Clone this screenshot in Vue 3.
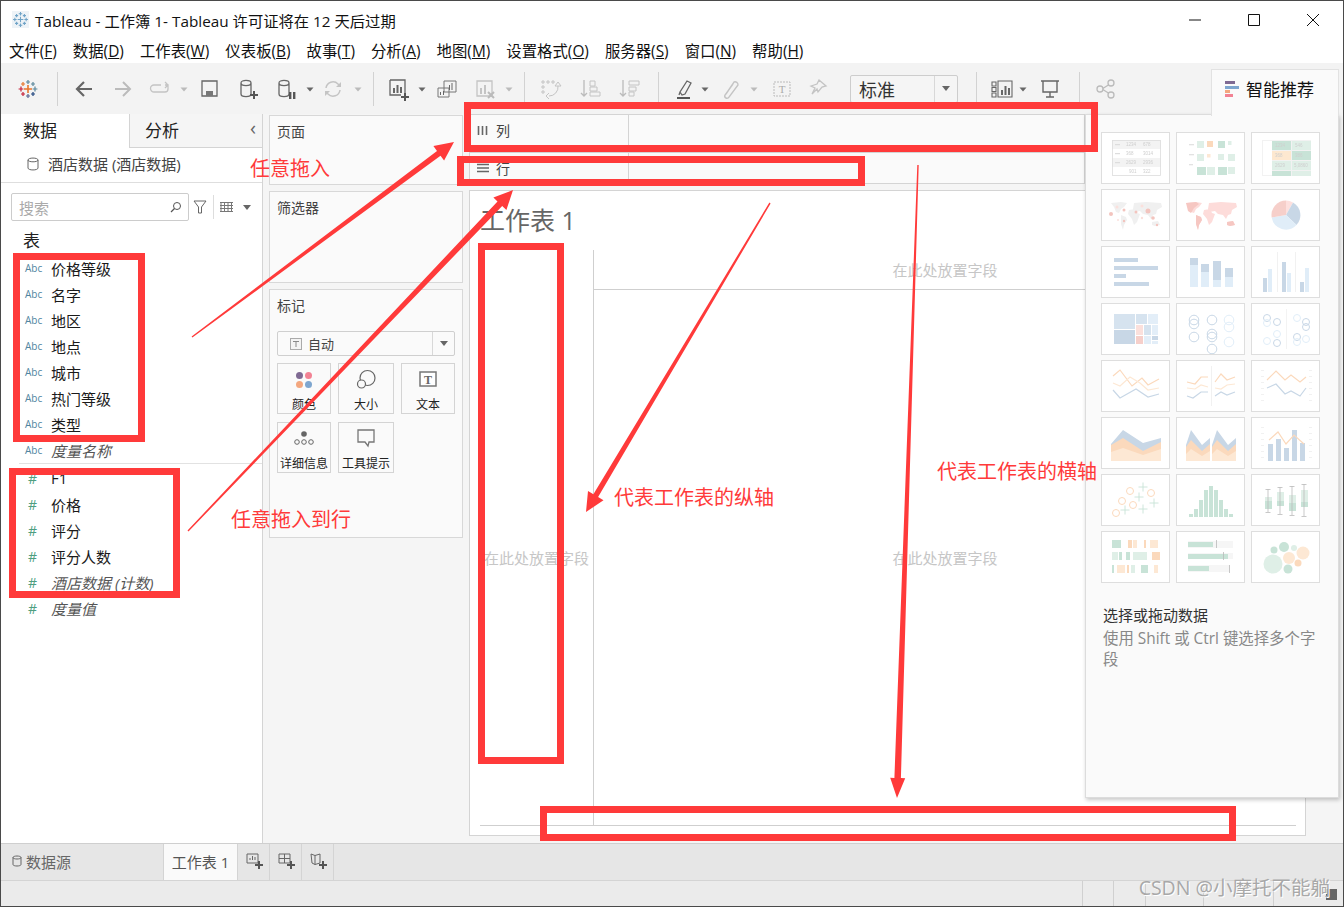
<script setup>
const menus = [
  ['文件', 'F'], ['数据', 'D'], ['工作表', 'W'], ['仪表板', 'B'], ['故事', 'T'], ['分析', 'A'],
  ['地图', 'M'], ['设置格式', 'O'], ['服务器', 'S'], ['窗口', 'N'], ['帮助', 'H']
]

const dims = ['价格等级', '名字', '地区', '地点', '城市', '热门等级', '类型']
const measures = [
  { name: 'F1' }, { name: '价格' }, { name: '评分' }, { name: '评分人数' },
  { name: '酒店数据 (计数)', it: true }, { name: '度量值', it: true }
]

const cyl = 'M5 6c0-3.4 10-3.4 10 0v11c0 3.4-10 3.4-10 0zM5 6c0 3.4 10 3.4 10 0'
const s = (d, c = '#666', w = 1.3) => `<path d="${d}" fill="none" stroke="${c}" stroke-width="${w}"/>`
const f = (d, c = '#666') => `<path d="${d}" fill="${c}"/>`
const caret = c => f('M8.5 10.5h7l-3.5 4z', c)
const logoPlus = (x, y, r, c, w = 1.2) => `<path d="M${x - r} ${y}h${r * 2}M${x} ${y - r}v${r * 2}" stroke="${c}" stroke-width="${w}" fill="none"/>`
const logo = logoPlus(12, 12, 4, '#e8762b', 1.6) + logoPlus(12, 5, 2, '#5b879b') + logoPlus(12, 19, 2, '#5b6591')
  + logoPlus(5, 12, 2.4, '#c72037') + logoPlus(19, 12, 2.4, '#5b879b') + logoPlus(7, 7, 2, '#e8762b')
  + logoPlus(17, 7, 2, '#59879b') + logoPlus(7, 17, 2, '#c72037') + logoPlus(17, 17, 2, '#1f447e')
const blueLogo = [[12, 12, 4], [12, 4, 2.5], [12, 20, 2.5], [4, 12, 2.5], [20, 12, 2.5], [6.500, 6.500, 2.2], [17.500, 6.500, 2.2], [6.500, 17.500, 2.2], [17.500, 17.500, 2.2]]
  .map(p => logoPlus(p[0], p[1], p[2], '#6fa3c7', 1.5)).join('')

const tools = [
  { w: 40, svg: logo },
  { w: 18, sep: true },
  { w: 36, svg: s('M20 12H5M12 5l-7 7 7 7', '#666', 2.2) },
  { w: 42, svg: s('M4 12h15M12 5l7 7-7 7', '#bbb', 2) },
  { w: 32, svg: s('M13 8H6a3 3 0 0 0 0 7h11a3 3 0 0 0 3-3V8h-3M17 5l3 3-3 3', '#c4c4c4') },
  { w: 16, svg: caret('#bbb') },
  { w: 36, svg: s('M4 4h15v15H4z') + f('M8 14h7v5H8z', '#777') },
  { w: 40, svg: s(cyl) + s('M14 18h8M18 14v8', '#555', 2) },
  { w: 36, svg: s(cyl) + f('M15 15h2.4v7H15zM19 15h2.4v7H19z', '#555') },
  { w: 12, svg: caret('#666') },
  { w: 34, svg: s('M5 11a7 7 0 0 1 12-4l2 2M19 13a7 7 0 0 1-12 4l-2-2', '#c4c4c4', 1.5) + f('M20 5v5h-5zM4 19v-5h5z', '#c4c4c4') },
  { w: 16, svg: caret('#bbb') },
  { w: 14, sep: true },
  { w: 36, svg: s('M4 3h15v14M4 3v15h11') + f('M7 11h2v5H7zM10.5 8h2v8h-2zM14 10h2v6h-2z', '#666') + s('M15 20h8M19 16v8', '#555', 2) },
  { w: 12, svg: caret('#666') },
  { w: 38, svg: s('M9 4h12v11H9zM3 11h11v9H3z', '#777', 1) + f('M14 8h1v5h-1zM16.500 6h1v7h-1zM5 15h1v3H5zM8 14h1v4H8z') },
  { w: 38, svg: s('M4 4h15v15H4z', '#c4c4c4') + f('M7 11h2v6H7zM11 8h2v9h-2z', '#c4c4c4') + s('M15 15l6 6M21 15l-6 6', '#bbb', 2) },
  { w: 10, svg: caret('#bbb') },
  { w: 20, sep: true },
  { w: 32, svg: s('M4 4h2v2H4zM9 4h2v2H9zM14 4h2v2h-2zM4 9h2v2H4zM4 14h2v2H4z', '#c4c4c4', 1) + s('M20 9a9 9 0 0 1-9 10M11 16l-3 3 3 3M20 5l3 4h-6z', '#c4c4c4', 1) },
  { w: 48, svg: s('M6 3v16M3 16l3 3 3-3', '#bbb') + s('M12 4h5v5h-5zM12 10h7v4h-7zM12 15h10v4H12z', '#c4c4c4', 1) },
  { w: 30, svg: s('M6 3v16M3 16l3 3 3-3', '#bbb') + s('M12 4h10v4H12zM12 10h7v4h-7zM12 15h5v4h-5z', '#c4c4c4', 1) },
  { w: 28, sep: true },
  { w: 24, svg: s('M8 15l2 3 3-1 6-11-4-2zM8 15l-1 3', '#666') + f('M5 20h13v2H5z', '#555') },
  { w: 18, svg: caret('#666') },
  { w: 32, svg: s('M8 17L16 5a3 3 0 0 1 4 3L11 20a2 2 0 0 1-4-2L15 7', '#c4c4c4', 1.4) },
  { w: 16, svg: caret('#bbb') },
  { w: 40, svg: '<rect x="4" y="5" width="16" height="14" fill="none" stroke="#bbb" stroke-dasharray="2 1"/><text x="12" y="16" text-anchor="middle" font-size="11" font-family="Liberation Serif" fill="#aaa">T</text>' },
  { w: 32, svg: s('M13 3l7 6-4 1-4 5-1-3-5 5 3-6-4-2 6-2z', '#c4c4c4') }
]

const tools2 = [
  { w: 9, svg: '' },
  { w: 18, sep: true },
  { w: 34, svg: s('M2 5h4v4H2zM2 10.500h4v4H2zM2 16h4v4H2zM8 4h14v16H8z', '#666', 1.1) + f('M11 13h2v5h-2zM14.500 9h2v9h-2zM18 11h2v7h-2z') },
  { w: 8, svg: caret('#666') },
  { w: 46, svg: s('M3 4h18M5 4v11h14V4M12 15v5M8 20h8', '#666', 1.4) },
  { w: 12, sep: true },
  { w: 42, svg: s('M8 12l8-5M8 12l8 5', '#bbb') + '<circle cx="6" cy="12" r="3" fill="#f3f3f3" stroke="#bbb" stroke-width="1.300"/><circle cx="17" cy="6" r="3" fill="#f3f3f3" stroke="#bbb" stroke-width="1.300"/><circle cx="17" cy="18" r="3" fill="#f3f3f3" stroke="#bbb" stroke-width="1.300"/>' }
]

// chart thumbnails, in a 68 x 51 box
const B = '#c8d7e6', BL = '#e0edf8', G = '#c8e3d7', GL = '#dfefe7', O = '#fbd9bc', OL = '#fde8d4', P = '#f6cfca'
const r = (x, y, w, h, c) => `<rect x="${x}" y="${y}" width="${w}" height="${h}" fill="${c}"/>`
const rs = (c, ...list) => list.map(a => r(a[0], a[1], a[2], a[3], c)).join('')
const c = (x, y, rad, col) => `<circle cx="${x}" cy="${y}" r="${rad}" fill="${col}"/>`
const ring = (x, y, rad, col) => `<circle cx="${x}" cy="${y}" r="${rad}" fill="none" stroke="${col}" stroke-width="1"/>`
const ln = (pts, col, w = 1.2) => `<polyline points="${pts}" fill="none" stroke="${col}" stroke-width="${w}"/>`
const area = (pts, col) => `<polygon points="${pts}" fill="${col}"/>`
const tx = (x, y, t) => `<text x="${x}" y="${y}" font-size="4.500" font-family="Liberation Sans" fill="#cfcfcf">${t}</text>`
const ticks = xs => [9, 15, 21, 27, 33, 39].map(y => xs.map(x => r(x, y, 3, 0.8, '#eee')).join('')).join('')
const world = 'M9 13l10-1 6 1-3 4-3 2-2 4-3-1-2-5zM19 25l5 2 1 3-3 5-1 5-2-6zM27 20l6-1 2 4 3 1-3 8-3 3-2-6-4-5zM32 13l12-1 15 1 1 4-5 3-1 4-3 1-2 4-3-4-5-1-3-3-6 1-1-3z M50 32l6-1 2 4-5 1-3-1z'
const dots = [[9, 24, 2], [15, 17, 1.5], [22, 20, 1.500], [34, 22, 1.500], [40, 16, 1.500], [46, 21, 2.500], [51, 28, 1.800], [40, 28, 1.200], [55, 35, 1.200], [22, 31, 1.200], [16, 30, 1]]

const table = () => r(10, 7, 49, 36, '#fff') + rs('#f3f3f3', [10, 7, 49, 9], [10, 25, 49, 9])
  + '<rect x="10.500" y="7.500" width="48" height="35" fill="none" stroke="#ddd" stroke-width="0.800"/>'
  + rs('#ddd', [13, 11, 5, 1.2], [13, 20, 5, 1.2], [13, 29, 5, 1.2])
  + tx(24, 13, '1234') + tx(41, 13, '678') + tx(24, 22, '368') + tx(41, 22, '3014') + tx(24, 31, '2629') + tx(41, 31, '2936') + tx(27, 40, '901') + tx(41, 40, '322')

const thumbs = [
  table(),
  rs('#e2e2e2', [12, 11, 5, 1.300], [12, 21, 5, 1.300], [12, 31, 4, 1.300]) + rs(GL, [20, 8, 7, 7], [51, 8, 3.5, 4], [20, 21, 7, 7], [41, 21, 6, 6], [51, 21, 7, 7], [30, 34, 8, 8], [51, 34, 7, 7]) + rs(G, [41, 8, 7, 7], [20, 34, 9, 8], [41, 34, 9, 8]) + r(30, 8, 6, 6, O) + r(30, 21, 3.5, 3.5, OL),
  r(10, 7, 49, 36, '#f2f2f2') + r(11, 8, 9, 34, '#fff') + rs(G, [20, 8, 19, 9], [40, 18, 19, 9], [20, 38, 19, 5]) + rs(GL, [40, 8, 19, 9], [20, 28, 19, 9], [40, 28, 19, 9], [40, 38, 19, 5]) + r(20, 18, 19, 9, '#fde8d0') + tx(23, 14, '1234') + tx(43, 14, '546') + tx(23, 24, '368') + tx(43, 24, '386') + tx(23, 34, '2629') + tx(42, 34, '5,0860'),
  `<path d="${world}" fill="#f0f0f0"/>` + dots.map((d, i) => c(d[0], d[1], d[2], i % 3 === 1 ? '#fbe0dc' : '#f3c4be')).join(''),
  `<path d="${world}" fill="#fddcda"/><path d="M9 13l10-1 3 2-5 4-3 5-3-2zM19 25l5 2 1 3-3 5-1 5-2-6zM50 32l6-1 2 4-5 1-3-1z" fill="#f6c7c2"/>`,
  `<path d="M34 25V10.500A14.500 14.500 0 0 1 41 12.500z" fill="#fde0de"/><path d="M34 25L41 12.500A14.500 14.500 0 0 1 44.500 35z" fill="${B}"/><path d="M34 25L44.500 35A14.500 14.500 0 0 1 19.700 27.500z" fill="${BL}"/><path d="M34 25L19.700 27.500A14.500 14.500 0 0 1 34 10.500z" fill="${P}"/>`,
  rs(B, [12, 11, 24, 4], [12, 19, 44, 4], [12, 27, 12, 4], [12, 35, 35, 4]),
  rs(B, [13, 11, 8, 7], [24, 17, 8, 8], [36, 14, 8, 19], [48, 21, 8, 9]) + rs(BL, [13, 18, 8, 22], [24, 25, 8, 15], [36, 33, 8, 7], [48, 30, 8, 10]),
  rs('#eee', [25, 5, 0.8, 40], [43, 5, 0.8, 40]) + rs(B, [11, 31, 4, 14], [30, 15, 4, 30], [48, 35, 4, 10]) + rs(BL, [16, 22, 4, 23], [35, 26, 4, 19], [53, 21, 4, 24]),
  rs('#d6e3ef', [12, 10, 21, 15], [34, 10, 11, 10], [42, 21, 7, 10]) + r(12, 26, 21, 14, B) + rs('#e3eef8', [46, 10, 10, 10], [50, 21, 6, 10], [42, 32, 7, 8], [50, 37, 6, 3]) + r(34, 21, 7, 10, '#fbe0dc') + r(34, 32, 7, 8, P) + r(50, 32, 6, 4, B),
  [[17, 16], [17, 20], [35, 16], [17, 33], [35, 30], [35, 33], [35, 45]].map(p => ring(p[0], p[1], 4.8, B)).join('') + [[52, 16], [52, 23], [52, 38]].map(p => ring(p[0], p[1], 4.8, BL)).join(''),
  r(34, 5, 0.7, 40, '#eee') + [[15, 14], [25, 18], [25, 39], [54, 18], [54, 23], [45, 33]].map(p => ring(p[0], p[1], 3.5, B)).join('') + [[15, 19], [25, 30], [15, 37], [45, 14], [45, 38], [54, 35]].map(p => ring(p[0], p[1], 3.5, BL)).join(''),
  ln('11,15 18,9 30,25 40,17 46,24 57,18', O) + ln('11,22 18,25 28,16 38,22 46,29 57,27', OL) + ln('11,29 18,37 34,28 46,36 57,33', B),
  r(34, 5, 0.8, 40, '#eee') + ln('10,21 18,23 24,16 31,16', O) + ln('10,27 18,28 24,24 31,26', OL) + ln('10,35 16,37 24,31 31,31', B) + ln('38,21 44,13 50,19 58,16', O) + ln('38,27 44,28 50,24 58,23', OL) + ln('38,35 44,31 50,34 58,31', B),
  ticks([9, 57]) + ln('15,19 24,10 33,19 39,14 48,21 54,16', O) + ln('15,27 24,23 33,33 39,30 48,35 54,27', B),
  area('9,26 21,12 41,25 59,20 59,43 9,43', B) + area('9,27 21,20 41,33 59,24 59,43 9,43', O) + area('9,34 21,30 41,37 59,31 59,43 9,43', OL),
  area('9,27 14,12 25,27 33,20 33,43 9,43', B) + area('9,29 14,22 25,33 33,26 33,43 9,43', O) + area('9,36 14,31 25,38 33,33 33,43 9,43', OL) + area('35,27 40,12 51,27 59,20 59,43 35,43', B) + area('35,29 40,22 51,33 59,26 59,43 35,43', O) + area('35,36 40,31 51,38 59,33 59,43 35,43', OL),
  ticks([9, 57]) + rs(B, [16, 26, 5, 17], [24, 21, 5, 22], [32, 30, 5, 13], [40, 12, 5, 31], [48, 25, 5, 18]) + ln('17,22 26,14 34,26 42,17 52,26', O),
  [[14, 38], [20, 26], [28, 16], [31, 30], [49, 18]].map(p => ring(p[0], p[1], 3.5, O)).join('') + [[41, 12], [37, 22], [23, 35], [41, 34], [52, 28]].map(p => `<path d="M${p[0] - 4.500} ${p[1]}h9M${p[0]} ${p[1] - 4.500}v9" stroke="${G}" stroke-width="0.900"/>`).join(''),
  [[12, 39], [17, 34], [22, 25], [27, 15], [32, 11], [37, 15], [42, 25], [47, 34], [52, 39]].map(p => r(p[0], p[1], 4, 42 - p[1], G)).join(''),
  [[16, 14, 37, 13, 22, 26, 34], [28, 12, 39, 25, 17, 26, 31], [40, 11, 40, 37, 20, 28, 36], [52, 9, 41, 49, 15, 27, 32]].map(a => r(a[3], a[4], 7, a[5] - a[4], GL) + r(a[3], a[5], 7, a[6] - a[5], G) + r(a[0] - 0.400, a[1], 0.800, a[2] - a[1], '#bbb') + r(a[0] - 2.500, a[1], 5, 0.800, '#bbb') + r(a[0] - 2.500, a[2], 5, 0.800, '#bbb')).join(''),
  rs(G, [10, 8, 9, 8], [24, 20, 4, 8], [17, 20, 3, 8], [10, 33, 2, 8], [39, 33, 7, 8]) + rs(O, [26, 8, 4, 8], [42, 8, 2, 8], [50, 20, 8, 8], [25, 33, 2, 8]) + rs(OL, [31, 8, 4, 8], [48, 8, 8, 8], [15, 33, 8, 8], [52, 33, 4, 8]) + rs(GL, [10, 20, 6, 8], [31, 20, 14, 8], [29, 33, 4, 8]),
  rs('#f6f6f6', [11, 9, 45, 7], [11, 21, 45, 6], [11, 33, 42, 7]) + rs(G, [11, 10, 25, 5], [11, 22, 40, 5], [11, 34, 21, 5]) + rs('#bbb', [39, 8, 0.800, 8], [46, 20, 0.800, 8], [52, 33, 0.800, 8]),
  c(21, 32, 9.5, GL) + c(22, 18, 3.5, G) + c(32, 15, 5, G) + c(42, 16, 3, GL) + c(37, 26, 6, OL) + c(51, 21, 6.5, OL) + c(46, 31, 3.5, O) + c(36, 37, 4.5, G)
]

// red marks drawn on top of the screenshot
const boxes = [
  [464, 102, 634, 50], [457, 156, 408, 30], [13, 253, 132, 189],
  [9, 468, 171, 130], [478, 243, 86, 521], [540, 806, 696, 35]
].map(b => ({ left: b[0] + 'px', top: b[1] + 'px', width: b[2] + 'px', height: b[3] + 'px' }))

function arrow(x1, y1, x2, y2, w, hw, hl) {
  const len = Math.hypot(x2 - x1, y2 - y1)
  const ux = (x2 - x1) / len, uy = (y2 - y1) / len
  const nx = -uy, ny = ux
  const bx = x2 - ux * hl, by = y2 - uy * hl
  const p = (x, y) => x.toFixed(1) + ',' + y.toFixed(1)
  return [p(x1 + nx * 0.7, y1 + ny * 0.7), p(bx + nx * w / 2, by + ny * w / 2), p(bx + nx * hw, by + ny * hw), p(x2, y2),
    p(bx - nx * hw, by - ny * hw), p(bx - nx * w / 2, by - ny * w / 2), p(x1 - nx * 0.7, y1 - ny * 0.7)].join(' ')
}
const arrows = [
  arrow(192, 337, 454, 142, 6, 9, 19),
  arrow(188, 531, 513, 190, 6.5, 9, 19),
  arrow(770, 203, 586, 512, 5.5, 9, 19),
  arrow(918, 165, 897, 798, 6.5, 7.5, 20)
]
const notes = [
  { t: '任意拖入', left: '250px', top: '154px' },
  { t: '任意拖入到行', left: '231px', top: '505px' },
  { t: '代表工作表的纵轴', left: '614px', top: '483px' },
  { t: '代表工作表的横轴', left: '937px', top: '457px' }
]
const statusCells = [1082, 1113, 1145, 1203, 1273]
</script>

<template>
  <div class="win">
    <div class="title">
      <span class="appicon">
        <svg width="17" height="17" viewBox="0 0 24 24" v-html="blueLogo"></svg>
      </span>
      <span class="title-text">Tableau - 工作簿 1- Tableau 许可证将在 12 天后过期</span>
      <div class="winbtns">
        <svg width="14" height="14" viewBox="0 0 14 14"><path d="M1 7h12" stroke="#111" fill="none"/></svg>
        <svg width="14" height="14" viewBox="0 0 14 14"><path d="M1.500 1.500h11v11h-11z" stroke="#111" fill="none"/></svg>
        <svg width="14" height="14" viewBox="0 0 14 14"><path d="M1 1l12 12M13 1L1 13" stroke="#111" fill="none"/></svg>
      </div>
    </div>

    <div class="menu">
      <span v-for="m in menus" :key="m[1]">{{ m[0] }}(<u>{{ m[1] }}</u>)</span>
    </div>

    <div class="toolbar">
      <template v-for="(t, i) in tools" :key="i">
        <div class="tool" :style="{ width: t.w + 'px' }">
          <i v-if="t.sep" class="sep"></i>
          <svg v-else width="24" height="24" viewBox="0 0 24 24" v-html="t.svg"></svg>
        </div>
      </template>
      <div class="size-select">
        <span>标准</span>
        <b><i class="tri"></i></b>
      </div>
      <template v-for="(t, i) in tools2" :key="'b' + i">
        <div class="tool" :style="{ width: t.w + 'px' }">
          <i v-if="t.sep" class="sep"></i>
          <svg v-else width="24" height="24" viewBox="0 0 24 24" v-html="t.svg"></svg>
        </div>
      </template>
    </div>

    <div class="main">
      <aside class="data">
        <div class="data-tabs">
          <div class="dtab active">数据</div>
          <div class="dtab">分析<span class="chev">‹</span></div>
        </div>
        <div class="source">
          <svg width="12" height="14" viewBox="0 0 12 14"><path d="M1 3c0-2.600 10-2.600 10 0v8c0 2.600-10 2.600-10 0zM1 3c0 2.400 10 2.400 10 0" fill="none" stroke="#666"/></svg>
          <span>酒店数据 (酒店数据)</span>
        </div>
        <div class="searchrow">
          <div class="search">
            <span>搜索</span>
            <svg width="12" height="12" viewBox="0 0 12 12"><circle cx="7" cy="5" r="3.500" fill="none" stroke="#555"/><path d="M4.500 7.500L1 11" stroke="#555" stroke-width="1.300"/></svg>
          </div>
          <svg class="funnel" width="14" height="14" viewBox="0 0 14 14"><path d="M1 1h12L8.500 7v6h-3V7z" fill="none" stroke="#666"/></svg>
          <i class="vsep"></i>
          <svg class="gridico" width="13" height="10" viewBox="0 0 13 10"><path d="M0 .500h13M0 3.500h13M0 6.500h13M0 9.500h13M1 0v10M4.500 0v10M8 0v10M11.500 0v10" stroke="#777" stroke-width="1" fill="none"/></svg>
          <i class="tri"></i>
        </div>
        <div class="tbl-head">表</div>
        <div v-for="d in dims" :key="d" class="field">
          <span class="abc">Abc</span><span>{{ d }}</span>
        </div>
        <div class="field it"><span class="abc">Abc</span><span>度量名称</span></div>
        <div class="split"></div>
        <div v-for="m in measures" :key="m.name" class="field" :class="{ it: m.it }">
          <span class="hash">#</span><span>{{ m.name }}</span>
        </div>
      </aside>

      <section class="cards">
        <div class="card pages"><h4>页面</h4></div>
        <div class="card filters"><h4>筛选器</h4></div>
        <div class="card marks">
          <h4>标记</h4>
          <div class="mark-select">
            <svg width="12" height="12" viewBox="0 0 12 12"><rect x=".5" y=".5" width="11" height="11" fill="#f3f3f3" stroke="#aaa"/><path d="M3 3.500h6M6 3.500v5.500" stroke="#888"/></svg>
            <span>自动</span>
            <b><i class="tri"></i></b>
          </div>
          <div class="mark-grid">
            <div class="mark">
              <svg width="24" height="24" viewBox="0 0 24 24"><circle cx="7.500" cy="7.500" r="3.500" fill="#7f6a93"/><circle cx="16.500" cy="7.500" r="3.500" fill="#f28294"/><circle cx="7.500" cy="16.500" r="3.500" fill="#f3a77f"/><circle cx="16.500" cy="16.500" r="3.500" fill="#7ea6cf"/></svg>
              <span>颜色</span>
            </div>
            <div class="mark">
              <svg width="24" height="24" viewBox="0 0 24 24"><circle cx="13.500" cy="10" r="7.500" fill="none" stroke="#666" stroke-width="1.200"/><circle cx="7.500" cy="16" r="4" fill="#fafafa" stroke="#666" stroke-width="1.200"/></svg>
              <span>大小</span>
            </div>
            <div class="mark">
              <svg width="24" height="24" viewBox="0 0 24 24"><rect x="4" y="4" width="16" height="14" fill="#fff" stroke="#777" stroke-width="1.500"/><text x="12" y="15.500" text-anchor="middle" font-size="12" font-weight="700" font-family="Liberation Serif" fill="#666">T</text></svg>
              <span>文本</span>
            </div>
            <div class="mark">
              <svg width="24" height="24" viewBox="0 0 24 24"><circle cx="12" cy="7" r="2.800" fill="#666"/><circle cx="5" cy="15" r="2.300" fill="none" stroke="#666"/><circle cx="12" cy="15" r="2.300" fill="none" stroke="#666"/><circle cx="19" cy="15" r="2.300" fill="none" stroke="#666"/></svg>
              <span>详细信息</span>
            </div>
            <div class="mark">
              <svg width="24" height="24" viewBox="0 0 24 24"><path d="M4 3h16v12h-5l-1 4-3-4H4z" fill="none" stroke="#777" stroke-width="1.300"/></svg>
              <span>工具提示</span>
            </div>
          </div>
        </div>
      </section>

      <section class="view">
        <div class="shelf cols">
          <span class="shelf-head">
            <svg width="12" height="12" viewBox="0 0 12 12"><path d="M1.500 2v9M5.500 2v9M9.500 2v9" stroke="#666" stroke-width="1.600"/></svg>列
          </span>
        </div>
        <div class="shelf rows">
          <span class="shelf-head">
            <svg width="12" height="12" viewBox="0 0 12 12"><path d="M0 2.500h12M0 6h12M0 9.500h12" stroke="#666" stroke-width="1.400"/></svg>行
          </span>
        </div>
        <div class="sheet">
          <h2>工作表 1</h2>
          <div class="drop">
            <div></div>
            <div class="drop-top">在此处放置字段</div>
            <div class="drop-left">在此处放置字段</div>
            <div class="drop-body">在此处放置字段</div>
          </div>
        </div>

        <div class="showme">
          <div class="showme-tab">
            <svg width="16" height="18" viewBox="0 0 16 18"><rect y="1" width="10" height="3" fill="#7f6a93"/><rect y="6" width="14" height="3" fill="#7ea6cf"/><rect y="10" width="5" height="3" fill="#f3a77f"/><rect y="14" width="8" height="3" fill="#f28294"/></svg>
            <span>智能推荐</span>
          </div>
          <div class="thumbs">
            <div v-for="(t, i) in thumbs" :key="i" class="thumb">
              <svg width="68" height="51" viewBox="0 0 68 51" v-html="t"></svg>
            </div>
          </div>
          <div class="hint">
            <p class="hint-a">选择或拖动数据</p>
            <p class="hint-b">使用 Shift 或 Ctrl 键选择多个字段</p>
          </div>
        </div>
      </section>
    </div>

    <div class="tabs">
      <div class="srctab">
        <svg width="10" height="12" viewBox="0 0 10 12"><path d="M1 2.500c0-2 8-2 8 0v7c0 2-8 2-8 0zM1 2.500c0 2 8 2 8 0" fill="none" stroke="#666"/></svg>
        <span>数据源</span>
      </div>
      <div class="sheettab">工作表 1</div>
      <div class="addtab"><svg width="18" height="18" viewBox="0 0 18 18"><path d="M1 2h11v9H1zM4 8V6M6.500 8V4M9 8V5" fill="none" stroke="#666"/><path d="M9 13h8M13 9v8" stroke="#555" stroke-width="2"/></svg></div>
      <div class="addtab"><svg width="18" height="18" viewBox="0 0 18 18"><path d="M1 2h11v9H1zM6.500 2v9M1 6.500h11" fill="none" stroke="#666"/><path d="M9 13h8M13 9v8" stroke="#555" stroke-width="2"/></svg></div>
      <div class="addtab"><svg width="18" height="18" viewBox="0 0 18 18"><path d="M1 2l4 1.500L10 2v9l-5 1.500L2 11zM5 3.500v9" fill="none" stroke="#666"/><path d="M9 13h8M13 9v8" stroke="#555" stroke-width="2"/></svg></div>
    </div>

    <div class="status">
      <i class="grip"></i>
    </div>

    <div class="marks-layer">
      <i v-for="x in statusCells" :key="x" class="status-line" :style="{ left: x + 'px' }"></i>
      <svg class="arrows" width="1344" height="907" viewBox="0 0 1344 907">
        <polygon v-for="(a, i) in arrows" :key="i" :points="a" fill="#ff3a3a" />
      </svg>
      <div v-for="(b, i) in boxes" :key="i" class="box" :style="b"></div>
      <div v-for="n in notes" :key="n.t" class="note" :style="{ left: n.left, top: n.top }">{{ n.t }}</div>
      <div class="wm">CSDN @小摩托不能躺</div>
    </div>
  </div>
</template>

<style scoped>
.win {
  position: relative;
  box-sizing: border-box;
  width: 1344px;
  height: 907px;
  border: 1px solid #4a4a4a;
  background: #fff;
  display: flex;
  flex-direction: column;
  overflow: hidden;
  font-family: "Open Sans", "Noto Sans CJK SC", sans-serif;
  color: #222;
}
.title {
  height: 37px;
  flex: none;
  display: flex;
  align-items: center;
  padding-left: 11px;
}
.appicon {
  width: 17px;
  height: 17px;
  display: block;
  background: #eef3f7;
  margin-right: 6px;
}
.title-text { font-size: 15.3px; color: #111; white-space: nowrap; }
.winbtns {
  margin-left: auto;
  display: flex;
  gap: 45px;
  padding-right: 23px;
}
.menu {
  height: 25px;
  flex: none;
  display: flex;
  align-items: center;
  gap: 16px;
  padding-left: 8px;
  font-size: 15.4px;
  color: #111;
  white-space: nowrap;
}
.toolbar {
  height: 51px;
  flex: none;
  display: flex;
  align-items: center;
  padding-left: 7px;
  background: #f3f3f3;
}
.tool {
  flex: none;
  height: 51px;
  display: flex;
  align-items: center;
  justify-content: center;
}
.tool svg { flex: none; overflow: visible; }
.sep { display: block; width: 1px; height: 34px; background: #d2d2d2; }
.size-select {
  flex: none;
  box-sizing: border-box;
  margin-left: 16px;
  width: 108px;
  height: 28px;
  border: 1px solid #cdcdcd;
  border-radius: 2px;
  background: #f5f5f5;
  display: flex;
  align-items: center;
  padding-left: 8px;
  font-size: 18px;
  color: #333;
}
.size-select b {
  margin-left: auto;
  width: 22px;
  height: 100%;
  border-left: 1px solid #d8d8d8;
  display: flex;
  align-items: center;
  justify-content: center;
}
.tri {
  display: block;
  width: 0;
  height: 0;
  border: 4px solid transparent;
  border-top: 5px solid #666;
  border-bottom: 0;
}

.main { flex: 1; display: flex; min-height: 0; background: #f5f5f5; }
.data {
  width: 262px;
  box-sizing: border-box;
  flex: none;
  background: #fff;
  border-right: 1px solid #d4d4d4;
}
.data-tabs { display: flex; height: 34px; }
.dtab {
  position: relative;
  box-sizing: border-box;
  flex: 1;
  font-size: 17px;
  line-height: 33px;
  padding-left: 15px;
  background: #f5f5f5;
  border-left: 1px solid #d4d4d4;
  border-bottom: 1px solid #d4d4d4;
  color: #222;
}
.dtab.active { flex: none; width: 128px; padding-left: 22px; background: #fff; border: 0; }
.chev { position: absolute; right: 6px; top: -3px; font-size: 20px; color: #666; }
.source {
  height: 35px;
  box-sizing: border-box;
  border-bottom: 1px solid #dedede;
  display: flex;
  align-items: center;
  gap: 9px;
  padding: 0 0 3px 26px;
  font-size: 15px;
  color: #444;
}
.searchrow { display: flex; align-items: center; height: 28px; margin: 10px 0 0 10px; }
.search {
  box-sizing: border-box;
  width: 178px;
  height: 28px;
  border: 1px solid #ccc;
  border-radius: 2px;
  display: flex;
  align-items: center;
  justify-content: space-between;
  padding: 0 6px 0 7px;
  font-size: 15px;
  color: #aaa;
}
.funnel { margin-left: 4px; }
.vsep { width: 1px; height: 24px; background: #ddd; margin: 0 6px; }
.gridico { margin-right: 10px; }
.tbl-head { height: 28px; line-height: 28px; margin-top: 6px; padding-left: 22px; font-size: 17px; color: #222; }
.field {
  height: 26px;
  display: flex;
  align-items: center;
  font-size: 15px;
  color: #1a1a1a;
  white-space: nowrap;
}
.field.it { font-style: italic; color: #555; }
.abc { width: 50px; padding-left: 24px; box-sizing: border-box; font-size: 10px; font-style: normal; color: #4f85a0; }
.hash { width: 50px; padding-left: 27px; box-sizing: border-box; font-size: 14px; font-style: normal; color: #4e9e80; }
.split { height: 1px; background: #e2e2e2; margin: 0 0 1px 18px; }

.cards {
  box-sizing: border-box;
  width: 206px;
  flex: none;
  padding: 1px 6px 0;
  display: flex;
  flex-direction: column;
  gap: 6px;
}
.card {
  box-sizing: border-box;
  background: #fafafa;
  border: 1px solid #d8d8d8;
  padding: 6px 7px 0;
}
.card h4 { margin: 0; font-size: 14px; font-weight: 400; line-height: 20px; color: #444; }
.pages { height: 70px; }
.filters { height: 92px; }
.marks { height: 249px; }
.mark-select {
  box-sizing: border-box;
  height: 25px;
  margin-top: 15px;
  border: 1px solid #cfcfcf;
  border-radius: 2px;
  display: flex;
  align-items: center;
  gap: 6px;
  padding-left: 12px;
  font-size: 13px;
  color: #444;
}
.mark-select b {
  margin-left: auto;
  width: 21px;
  height: 100%;
  border-left: 1px solid #d8d8d8;
  display: flex;
  align-items: center;
  justify-content: center;
}
.mark-grid {
  display: grid;
  grid-template-columns: 54px 56px 54px;
  grid-auto-rows: 51px;
  column-gap: 7px;
  row-gap: 8px;
  margin-top: 7px;
}
.mark {
  box-sizing: border-box;
  border: 1px solid #d4d4d4;
  display: flex;
  flex-direction: column;
  align-items: center;
  padding-top: 4px;
  font-size: 12px;
  line-height: 16px;
  color: #222;
  white-space: nowrap;
}
.mark svg { flex: none; margin-bottom: 5px; }

.view { position: relative; flex: 1; min-width: 0; display: flex; flex-direction: column; padding: 0 0 7px; }
.shelf {
  box-sizing: border-box;
  flex: none;
  height: 32px;
  margin-bottom: 6px;
  width: 616px;
  background: #fafafa;
  border: 1px solid #d4d4d4;
  font-size: 14px;
  color: #444;
  display: flex;
  align-items: center;
}
.shelf-head {
  box-sizing: border-box;
  width: 159px;
  height: 100%;
  display: flex;
  align-items: center;
  gap: 7px;
  padding-left: 7px;
  border-right: 1px solid #d4d4d4;
}
.sheet {
  box-sizing: border-box;
  flex: 1;
  width: 837px;
  background: #fff;
  border: 1px solid #d4d4d4;
  display: flex;
  flex-direction: column;
  padding: 0 9px 9px 10px;
}
.sheet h2 { margin: 0; height: 59px; line-height: 58px; font-size: 25px; font-weight: 400; color: #666; white-space: nowrap; }
.drop {
  flex: 1;
  display: grid;
  grid-template-columns: 113px 1fr;
  grid-template-rows: 40px 1fr;
  border-bottom: 1px solid #cfcfcf;
  font-size: 15px;
  color: #c6c6c6;
}
.drop-top, .drop-left, .drop-body { display: flex; align-items: center; justify-content: center; white-space: nowrap; }
.drop-top { border-left: 1px solid #cfcfcf; border-bottom: 1px solid #cfcfcf; }
.drop-body { border-left: 1px solid #cfcfcf; }

.showme {
  position: absolute;
  left: 616px;
  top: 0;
  box-sizing: border-box;
  width: 254px;
  height: 684px;
  background: #fafafa;
  border: 1px solid #dcdcdc;
  box-shadow: 1px 2px 4px rgba(0, 0, 0, .22);
  padding: 17px 0 0 15px;
}
.showme-tab {
  position: absolute;
  right: -1px;
  top: -46px;
  box-sizing: border-box;
  width: 128px;
  height: 47px;
  background: #fafafa;
  border: 1px solid #e2e2e2;
  border-bottom: 0;
  display: flex;
  align-items: center;
  gap: 5px;
  padding: 0 0 9px 13px;
  font-size: 17px;
  color: #111;
}
.thumbs {
  display: grid;
  grid-template-columns: repeat(3, 69px);
  grid-auto-rows: 52px;
  column-gap: 6px;
  row-gap: 5px;
}
.thumb {
  box-sizing: border-box;
  background: #fff;
  border: 1px solid #dedede;
  overflow: hidden;
}
.thumb svg { display: block; filter: blur(.3px); }
.hint { margin-top: 21px; padding-left: 2px; width: 222px; }
.hint p { margin: 0; }
.hint-a { font-size: 15px; line-height: 22px; color: #333; }
.hint-b { font-size: 15.4px; line-height: 21px; color: #888; margin-top: 2px !important; }

.tabs {
  height: 38px;
  flex: none;
  box-sizing: border-box;
  background: #e6e6e6;
  border-top: 1px solid #cfcfcf;
  border-bottom: 1px solid #d4d4d4;
  display: flex;
  font-size: 15px;
  color: #666;
}
.srctab { width: 163px; box-sizing: border-box; display: flex; align-items: center; gap: 4px; padding: 0 0 2px 11px; border-right: 1px solid #d4d4d4; }
.sheettab { width: 74px; box-sizing: border-box; background: #fafafa; display: flex; align-items: center; justify-content: center; padding-bottom: 2px; font-size: 15px; color: #555; border-right: 1px solid #d4d4d4; }
.addtab { width: 32px; box-sizing: border-box; display: flex; align-items: center; justify-content: center; padding: 0 0 2px 2px; border-right: 1px solid #d4d4d4; }
.status { height: 25px; flex: none; background: #ebebeb; position: relative; }
.grip { position: absolute; right: 6px; bottom: 6px; width: 11px; height: 11px; background: #666; }

.marks-layer { position: absolute; inset: -1px; pointer-events: none; }
.arrows { position: absolute; left: 0; top: 0; }
.box { position: absolute; box-sizing: border-box; border: 7px solid #ff3a3a; }
.note { position: absolute; font-size: 20px; line-height: 28px; color: #ff3a3a; white-space: nowrap; font-family: "Noto Sans CJK SC", sans-serif; }
.status-line { position: absolute; top: 881px; height: 25px; width: 1px; background: #d0d0d0; }
.wm {
  position: absolute;
  right: 14px;
  top: 875px;
  font-size: 19.5px;
  line-height: 26px;
  color: #a8a8a8;
  text-shadow: 1px 1px 0 #fff;
  white-space: nowrap;
}
</style>
